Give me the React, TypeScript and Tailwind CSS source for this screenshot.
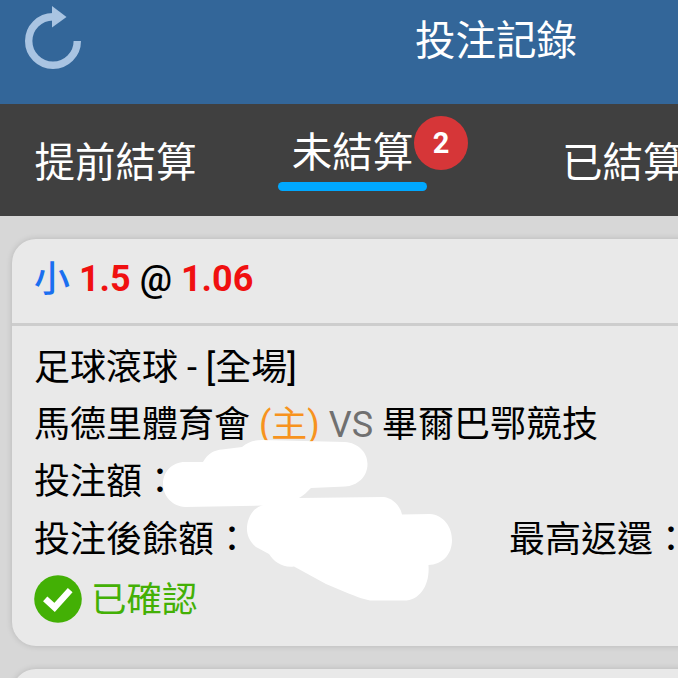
import type { ReactNode } from 'react'

function RefreshIcon() {
  return (
    <svg viewBox="0 0 60 72" className="h-[72px] w-[60px] shrink-0" aria-hidden="true">
      <path d="M53.300 41 A24.300 24.300 0 1 1 29 16.700" fill="none" stroke="#a9c4e2" strokeWidth="7.4" />
      <path d="M28 6 L42.500 17 L28 27.500 Z" fill="#a9c4e2" />
    </svg>
  )
}

function CheckIcon() {
  return (
    <svg viewBox="0 0 48 48" className="h-12 w-12 shrink-0" aria-hidden="true">
      <circle cx="24" cy="24" r="23.8" fill="#43b005" />
      <path d="M11.2 23.8 L20.6 32.4 L36.2 15.2" fill="none" stroke="#fff" strokeWidth="6.4" />
    </svg>
  )
}

// hides the stake and balance amounts
function Redaction() {
  return (
    <svg
      viewBox="163 440 290 162"
      className="pointer-events-none absolute left-[151px] top-[201px] h-[162px] w-[290px]"
      aria-hidden="true"
    >
      <path
        fill="#fff"
        d="M163 484 C163 472 172 462 185 462 L203 462 C208 453 215 450 222 449.500 L242 447 C248 442 254 440 262 440 L345 442 C358 443 367.500 452 367.500 464 C367.500 477 357 486 345 486.500 L311 488 C307 492 304 495 299 498 L384 497 C392 498 400 505 402 514.500 L430 514 C443 515 452 526 452 540 C452 555 442 564.500 428.500 565 C430 585 420 600.500 404 600.500 L370 600.500 C362 599 355 596 345 592 L326 584 L294 566.500 C283 568 274 562 269 554 L256 547 C249 541 246.500 534 247 527 C248 516 254 507 263 505.500 L185 507 C172 506 163 496 163 484 Z"
      />
    </svg>
  )
}

function Row({ children }: { children: ReactNode }) {
  return <div className="flex h-[57.300px] items-center whitespace-pre">{children}</div>
}

export default function App() {
  return (
    <div
      lang="zh-TW"
      className="flex h-[678px] w-[678px] flex-col overflow-hidden bg-[#d7d7d7] font-[Roboto,'Noto_Sans_CJK_TC',sans-serif] text-[36px] leading-[48px] text-black"
    >
      <header className="flex h-[104px] shrink-0 items-start bg-[#336699] pl-[24px]">
        <RefreshIcon />
        <h1 className="ml-[331px] mt-[17px] whitespace-nowrap text-[40.500px] leading-[48px] text-white">投注記錄</h1>
      </header>

      <nav className="flex h-[112px] shrink-0 whitespace-nowrap bg-[#404040] text-[40.500px] leading-[48px] text-white">
        <div className="ml-[34.500px] mt-[35px] w-[162px] shrink-0">提前結算</div>
        <div className="relative ml-[81.500px] mt-[25px] flex h-[62px] w-[149px] shrink-0 flex-col items-center justify-between">
          <span>未結算</span>
          <div className="h-[9px] w-full shrink-0 rounded-full bg-[#00a8ff]" />
          <span className="absolute -top-[13px] left-[136px] flex h-[54px] w-[54px] items-center justify-center rounded-full bg-[#d63638] text-[29px] font-bold">
            2
          </span>
        </div>
        <div className="ml-[135px] mt-[35px] shrink-0">已結算</div>
      </nav>

      <main className="flex flex-1 flex-col gap-[23px] pl-[12px] pt-[23px]">
        <section className="relative h-[407px] w-[720px] shrink-0 rounded-[24px] bg-[#e9e9e9] shadow-[0_0_6px_rgba(0,0,0,0.15)]">
          <div className="flex h-[87px] items-center whitespace-pre border-b-[3px] border-[#cdcdcd] pb-[4px] pl-[22px]">
            <span className="pt-[2px] font-medium text-[#1a6ff0]">小</span>
            <span className="font-bold text-[#f01010]"> 1.5</span>
            <span className="font-medium"> @ </span>
            <span className="font-bold text-[#f01010]">1.06</span>
          </div>

          <div className="pl-[22px] pt-[13px]">
            <Row>足球滾球 - [全場]</Row>
            <Row>
              馬德里體育會 <span className="text-[#f7931e]">(主)</span>
              <span className="text-[#707070]"> VS</span> 畢爾巴鄂競技
            </Row>
            <Row>投注額：</Row>
            <Row>
              <span className="w-[475px]">投注後餘額：</span>
              <span>最高返還：</span>
            </Row>
            <div className="mt-[6px] flex items-center gap-[9px] text-[35.500px] text-[#43b005]">
              <CheckIcon />
              <span className="pt-[2px]">已確認</span>
            </div>
          </div>
          <Redaction />
        </section>

        <section className="h-[100px] w-[720px] shrink-0 rounded-[24px] bg-[#e9e9e9] shadow-[0_0_6px_rgba(0,0,0,0.15)]" />
      </main>
    </div>
  )
}
